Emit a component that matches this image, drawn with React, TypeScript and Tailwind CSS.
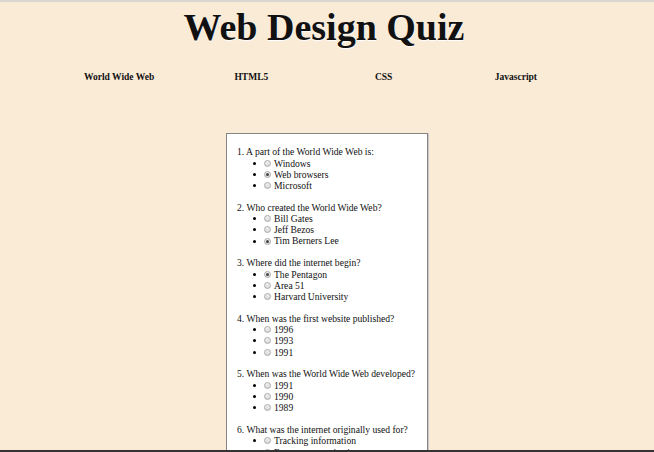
import React from 'react';

type Question = {
  text: string;
  options: string[];
  checked: number | null;
};

const questions: Question[] = [
  { text: 'A part of the World Wide Web is:', options: ['Windows', 'Web browsers', 'Microsoft'], checked: 1 },
  { text: 'Who created the World Wide Web?', options: ['Bill Gates', 'Jeff Bezos', 'Tim Berners Lee'], checked: 2 },
  { text: 'Where did the internet begin?', options: ['The Pentagon', 'Area 51', 'Harvard University'], checked: 0 },
  { text: 'When was the first website published?', options: ['1996', '1993', '1991'], checked: null },
  { text: 'When was the World Wide Web developed?', options: ['1991', '1990', '1989'], checked: null },
  { text: 'What was the internet originally used for?', options: ['Tracking information', 'Faster communication', 'Online shopping'], checked: null },
];

const navLinks = ['World Wide Web', 'HTML5', 'CSS', 'Javascript'];

const Radio: React.FC<{ checked: boolean }> = ({ checked }) => (
  <span className="w-[7px] h-[7px] rounded-full border border-[#a9a9a9] bg-gradient-to-b from-[#f2f2f2] to-[#d9d9d9] flex items-center justify-center shrink-0">
    {checked && <span className="w-[3px] h-[3px] rounded-full bg-[#444]"></span>}
  </span>
);

const App: React.FC = () => {
  return (
    <div className="h-screen flex flex-col bg-[#faebd7] text-[#111] font-['Liberation_Serif',serif] overflow-hidden">
      <div className="h-[2px] bg-[#d9d6d2] shrink-0"></div>

      <div className="flex-1 overflow-hidden">
        <h1 className="pt-[6px] pr-[6px] text-center text-[38px] leading-[38px] font-bold [text-shadow:0_1px_1px_#fff]">
          Web Design Quiz
        </h1>

        <nav className="mt-[26px] ml-[53px] w-[529px] grid grid-cols-4 text-center text-[9.5px] leading-[11px] font-bold">
          {navLinks.map((link) => (
            <a key={link} href="#" className="text-[#111]">
              {link}
            </a>
          ))}
        </nav>

        <div className="mt-[50px] mx-auto w-[202px] bg-white border border-[#858585] shadow-[1px_0_0_#c9c9c9] pt-[12px] pl-[10px] text-[9.6px]">
          {questions.map((q, index) => (
            <div key={index} className="mb-[10.5px]">
              <p className="leading-[11.5px] whitespace-nowrap">
                {index + 1}. {q.text}
              </p>
              <ul>
                {q.options.map((opt, i) => (
                  <li key={opt} className="grid grid-cols-[27px_7px_auto] items-center h-[11.2px] leading-[11.2px] whitespace-nowrap">
                    <span className="justify-self-end mr-[8px] w-[3px] h-[3px] rounded-full bg-black"></span>
                    <Radio checked={q.checked === i} />
                    <span className="ml-[3px]">{opt}</span>
                  </li>
                ))}
              </ul>
            </div>
          ))}
        </div>
      </div>

      <div className="h-[2px] bg-[#333] shrink-0"></div>
    </div>
  );
};

export default App;
